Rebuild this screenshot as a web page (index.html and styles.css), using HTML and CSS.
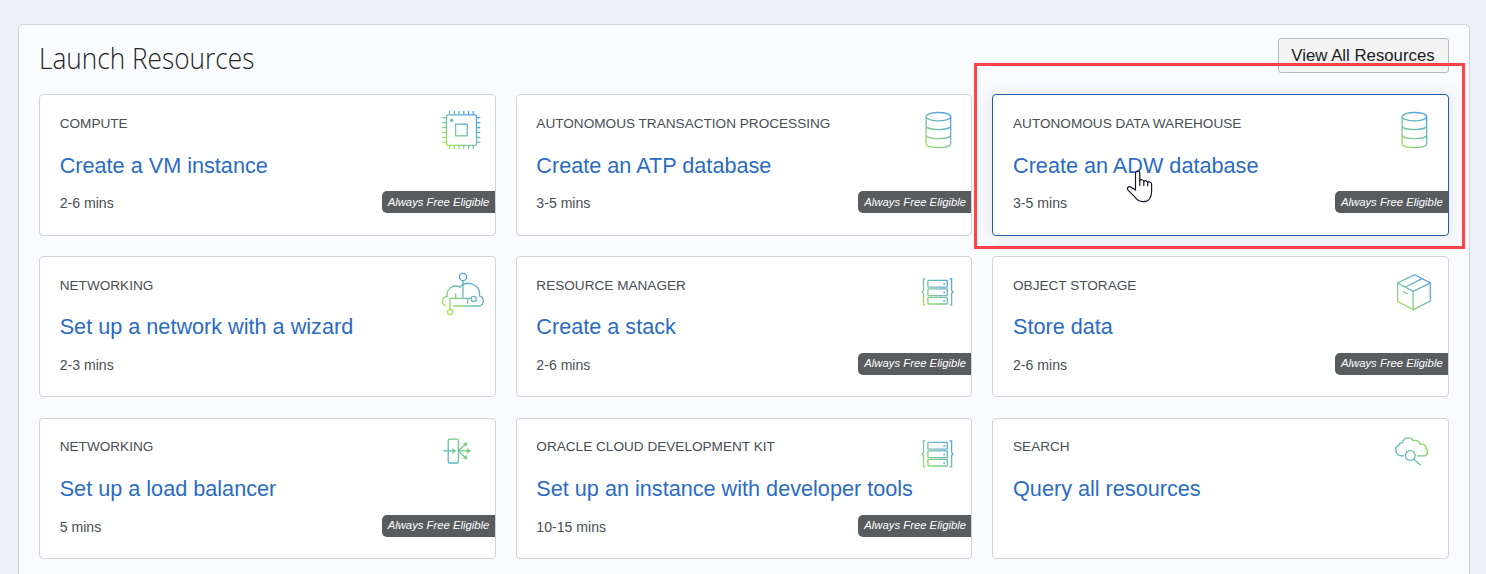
FILE: index.html
```html
<!DOCTYPE html>
<html lang="en">
<head>
<meta charset="utf-8">
<title>Launch Resources</title>
<link rel="stylesheet" href="styles.css">
</head>
<body>
<svg class="defs" width="0" height="0" aria-hidden="true">
  <defs>
    <linearGradient id="cool" gradientUnits="userSpaceOnUse" x1="6" y1="42" x2="36" y2="10">
      <stop offset="0" stop-color="#a0e650"/><stop offset=".5" stop-color="#6fbdb0"/><stop offset="1" stop-color="#4a9bf5"/>
    </linearGradient>
    <linearGradient id="warm" gradientUnits="userSpaceOnUse" x1="4" y1="32" x2="30" y2="14">
      <stop offset="0" stop-color="#55aee0"/><stop offset=".5" stop-color="#6cc3a0"/><stop offset="1" stop-color="#86dc55"/>
    </linearGradient>
    <symbol id="chip" viewBox="0 0 50 50">
      <rect x="6.5" y="10.8" width="30" height="30.6" rx="1.5"/><rect x="15.6" y="20.2" width="11.6" height="11.6"/>
      <circle class="dot" cx="11.7" cy="16.4" r="1"/>
      <path d="M9.5 10.8V7M14.3 10.8V7M19 10.8V7M23.8 10.8V7M28.6 10.8V7M33.3 10.8V7M9.5 41.4V45M14.3 41.4V45M19 41.4V45M23.8 41.4V45M28.6 41.4V45M33.3 41.4V45M6.5 13.7H2.2M6.5 18.7H2.2M6.5 23.5H2.2M6.5 28.4H2.2M6.5 33.3H2.2M6.5 38.2H2.2M36.5 13.7H40.3M36.5 18.7H40.3M36.5 23.5H40.3M36.5 28.4H40.3M36.5 33.3H40.3M36.5 38.2H40.3"/>
    </symbol>
    <symbol id="database" viewBox="0 0 50 50">
      <ellipse cx="21.4" cy="12.7" rx="12.3" ry="4.2"/>
      <path d="M9.1 12.7V40C9.1 42 14 43.6 21.4 43.6S33.7 42 33.7 40V12.7M9.1 21.7C9.1 23.9 14 25.6 21.4 25.6S33.7 23.9 33.7 21.7M9.1 30.9C9.1 33 14 34.6 21.4 34.6S33.7 33 33.7 30.9"/>
    </symbol>
    <symbol id="network" viewBox="0 0 50 50">
      <path d="M6.3 39.9C.8 38.7 1.2 31 7.3 30.3C5.8 23.5 13 17.6 20 21.2C26.8 13.5 40.800 18 39.6 30.2C44.8 31.5 44.7 39.2 38.7 40H13.3M23 14.7V32.4M10 43V32.4H30.8M15.7 27.5V32.4M27.7 32.4V37.7"/>
      <circle cx="23" cy="11" r="3.7"/><circle cx="33.7" cy="32.9" r="2.6"/><circle cx="10" cy="46" r="2.6"/>
    </symbol>
    <symbol id="stack" viewBox="0 0 50 50">
      <rect x="10.9" y="14.3" width="19.4" height="6.8" rx=".7"/><rect x="10.9" y="22.9" width="19.4" height="6.8" rx=".7"/><rect x="10.9" y="31.3" width="19.4" height="6.7" rx=".7"/>
      <path d="M26.3 18H28.3M26.3 26.5H28.3M26.3 35H28.3M8.3 12.9H6.5V24.5L5 26L6.5 27.5V38.9H8.3M32.5 12.9H34.6V24.5L36.1 26L34.6 27.5V38.9H32.5"/>
    </symbol>
    <symbol id="box" viewBox="0 0 50 50">
      <path d="M21.7 8.7L37.3 17V35L20.1 43.7L4.7 35.3V17ZM4.7 17L20.1 25.4L37.3 17M20.1 25.4V43.7M12.7 21L28.9 12.7M10 25.5L14.7 27.8"/>
    </symbol>
    <symbol id="balancer" viewBox="0 0 50 50">
      <rect x="8.2" y="11.1" width="10.2" height="23.9" rx="1.2"/>
      <path d="M3 22.9H14M18.4 22.9H29M18.4 22.9L25.5 16M18.4 22.9L25.5 29.8"/>
      <path class="head" d="M12.5 20.5L16 22.9L12.5 25.3ZM27 20.5L30.8 22.9L27 25.3ZM23.2 15.5L27 14.5L26.2 18.6ZM23.2 30.3L27 31.3L26.2 27.2Z"/>
    </symbol>
    <symbol id="query" viewBox="0 0 50 50">
      <path d="M11.2 27.9H9C2 27.500.8 18.800 5.800 17.600C5.500 15.800 7.100 14.500 9.300 14.700C10.700 9.300 17.800 8.200 20.400 12.600C23.100 11.700 26.600 13 27.200 16.200C31.600 15.600 33 18.300 32.800 20.400C36 22.600 34.600 27.400 31.100 27.900H24M20.800 31L27.600 37.300"/>
      <circle cx="17.300" cy="27.500" r="4.900"/>
    </symbol>
  </defs>
</svg>
<main class="panel">
  <header class="panel-header">
    <h1 class="heading">Launch Resources</h1>
    <button class="view-all">View All Resources</button>
  </header>
  <section class="cards">
    <article class="card"><div class="category">COMPUTE</div><svg class="icon"><use href="#chip"/></svg><a class="link">Create a VM instance</a><div class="time">2-6 mins</div><span class="badge">Always Free Eligible</span></article>
    <article class="card"><div class="category">AUTONOMOUS TRANSACTION PROCESSING</div><svg class="icon"><use href="#database"/></svg><a class="link">Create an ATP database</a><div class="time">3-5 mins</div><span class="badge">Always Free Eligible</span></article>
    <article class="card active"><div class="category">AUTONOMOUS DATA WAREHOUSE</div><svg class="icon"><use href="#database"/></svg><a class="link">Create an ADW database</a><div class="time">3-5 mins</div><span class="badge">Always Free Eligible</span></article>
    <article class="card"><div class="category">NETWORKING</div><svg class="icon"><use href="#network"/></svg><a class="link">Set up a network with a wizard</a><div class="time">2-3 mins</div></article>
    <article class="card"><div class="category">RESOURCE MANAGER</div><svg class="icon"><use href="#stack"/></svg><a class="link">Create a stack</a><div class="time">2-6 mins</div><span class="badge">Always Free Eligible</span></article>
    <article class="card"><div class="category">OBJECT STORAGE</div><svg class="icon"><use href="#box"/></svg><a class="link">Store data</a><div class="time">2-6 mins</div><span class="badge">Always Free Eligible</span></article>
    <article class="card"><div class="category">NETWORKING</div><svg class="icon warm"><use href="#balancer"/></svg><a class="link">Set up a load balancer</a><div class="time">5 mins</div><span class="badge">Always Free Eligible</span></article>
    <article class="card"><div class="category">ORACLE CLOUD DEVELOPMENT KIT</div><svg class="icon"><use href="#stack"/></svg><a class="link">Set up an instance with developer tools</a><div class="time">10-15 mins</div><span class="badge">Always Free Eligible</span></article>
    <article class="card"><div class="category">SEARCH</div><svg class="icon warm"><use href="#query"/></svg><a class="link">Query all resources</a></article>
  </section>
</main>
<div class="callout"></div>
<svg class="pointer" viewBox="0 0 28 34">
  <path d="M9.5 20V3.5C9.5 .4 13.8 .4 13.8 3.5V10.5C15 9.2 17.3 9.6 17.8 11.3C19.2 10.2 21.2 10.7 21.7 12.4C23.3 11.4 25.6 12.2 25.6 14.3V21C25.6 27.5 22.5 31.7 17.3 31.7C12.7 31.7 11 29.8 8.5 26.7L2.2 20.3C.1 17.7 3 15.7 5.3 17.2Z"/>
  <path d="M13.8 10V15.5M17.8 11.3V15.5M21.7 12.4V15.8"/>
</svg>
</body>
</html>
```
FILE: styles.css
```css
* { box-sizing: border-box; }
body {
  margin: 0;
  height: 574px;
  padding: 24px 16px 0 18px;
  overflow: hidden;
  position: relative;
  background: #eff0f5;
  font-family: "Liberation Sans", Arial, sans-serif;
  color: #494e53;
}
.defs { position: absolute; }
.panel {
  height: 550px;
  padding: 13px 20px 0;
  border: 1px solid #d0d2d8;
  border-bottom: 0;
  border-radius: 5px 5px 0 0;
  background: #fafbff;
}
.panel-header { display: flex; justify-content: space-between; height: 56px; }
.heading {
  margin: 0;
  font: 300 28.5px/40px "Open Sans", "Noto Sans", sans-serif;
  color: #252525;
  transform: scaleX(.92);
  transform-origin: 0 0;
}
.view-all {
  width: 171px;
  height: 35px;
  padding: 0 1px 0 0;
  border: 1px solid #b6babf;
  border-radius: 3px;
  background: #f4f4f4;
  font: 16.8px/33px "Liberation Sans", Arial, sans-serif;
  color: #202020;
  white-space: nowrap;
}
.cards {
  display: grid;
  grid-template-columns: repeat(3, 1fr);
  grid-auto-rows: 141.5px;
  gap: 20.3px 20px;
}
.card {
  display: grid;
  grid-template-columns: 1fr auto;
  grid-template-rows: 48px 44px 22px;
  padding: 4px 0 0 19.7px;
  border: 1px solid #d0d4d9;
  border-radius: 4px;
  background: #fff;
  position: relative;
}
.card.active { border-color: #1f5fa6; box-shadow: 0 2px 18px rgba(60, 70, 95, .14); }
.category { padding-top: 16.8px; font-size: 13.6px; line-height: 16px; white-space: nowrap; }
.icon {
  width: 50px;
  height: 50px;
  margin: 5px 4.6px 0 0;
  justify-self: end;
  overflow: visible;
  fill: none;
  stroke: url(#cool);
  stroke-width: 1.3;
}
.icon.warm { stroke: url(#warm); }
.dot { fill: #6fbdb0; }
.head { fill: #76ce80; stroke: #76ce80; stroke-width: .5; }
.link { grid-column: 1 / -1; padding-top: 5.6px; font-size: 21.65px; line-height: 26px; color: #2a6cc4; white-space: nowrap; }
.time { grid-column: 1; font-size: 14.1px; line-height: 24px; }
.badge {
  grid-column: 2;
  height: 22px;
  width: 113px;
  padding: .6px 0 0 6px;
  justify-self: end;
  border-radius: 5px 0 0 5px;
  background: #585c5f;
  color: #fff;
  font-size: 11.3px;
  font-style: italic;
  line-height: 21px;
  white-space: nowrap;
}
.callout { position: absolute; left: 974px; top: 63px; width: 491px; height: 186px; border: 3px solid #ff4444; }
.pointer { position: absolute; left: 1126px; top: 170px; width: 28px; height: 34px; fill: #fff; stroke: #15152a; stroke-width: 1.2; stroke-linecap: round; }
```
